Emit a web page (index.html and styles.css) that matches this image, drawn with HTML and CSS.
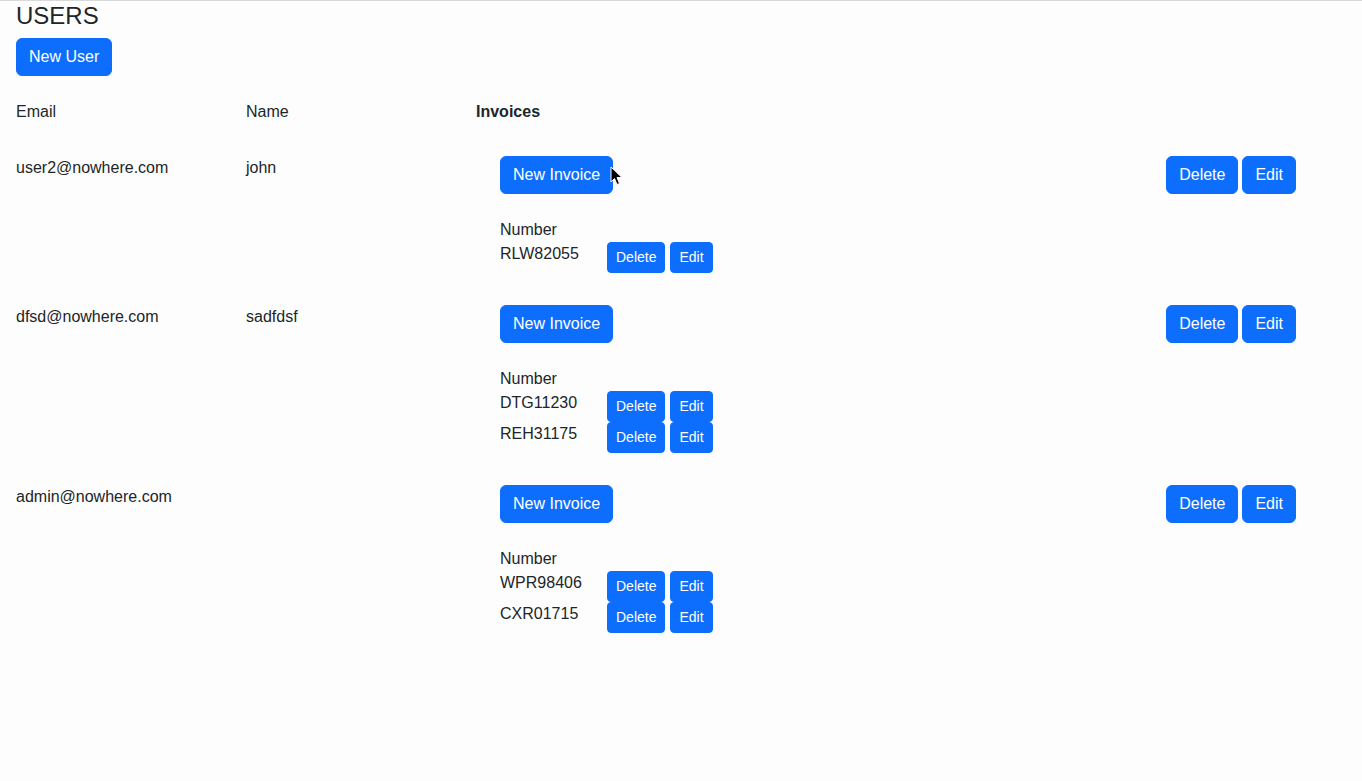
FILE: index.html
```html
<html lang="en">
<head>
  <meta charset="UTF-8">
  <title>Users</title>
  <link rel="stylesheet" href="styles.css">
</head>
<body>

  <div class="page">
    <h4 class="title">USERS</h4>
    <button class="btn">New User</button>

    <div class="users">
      <div class="row head">
        <div>Email</div>
        <div>Name</div>
        <div class="bold">Invoices</div>
        <div></div>
      </div>

      <div class="row">
        <div>user2@nowhere.com</div>
        <div>john</div>
        <div class="invoices">
          <button class="btn">New Invoice</button>
          <div class="inv-head">Number</div>
          <div class="inv-row">
            <div class="inv-num">RLW82055</div>
            <button class="btn btn-sm">Delete</button>
            <button class="btn btn-sm">Edit</button>
          </div>
        </div>
        <div class="actions">
          <button class="btn">Delete</button>
          <button class="btn">Edit</button>
        </div>
      </div>

      <div class="row">
        <div>dfsd@nowhere.com</div>
        <div>sadfdsf</div>
        <div class="invoices">
          <button class="btn">New Invoice</button>
          <div class="inv-head">Number</div>
          <div class="inv-row">
            <div class="inv-num">DTG11230</div>
            <button class="btn btn-sm">Delete</button>
            <button class="btn btn-sm">Edit</button>
          </div>
          <div class="inv-row">
            <div class="inv-num">REH31175</div>
            <button class="btn btn-sm">Delete</button>
            <button class="btn btn-sm">Edit</button>
          </div>
        </div>
        <div class="actions">
          <button class="btn">Delete</button>
          <button class="btn">Edit</button>
        </div>
      </div>

      <div class="row">
        <div>admin@nowhere.com</div>
        <div></div>
        <div class="invoices">
          <button class="btn">New Invoice</button>
          <div class="inv-head">Number</div>
          <div class="inv-row">
            <div class="inv-num">WPR98406</div>
            <button class="btn btn-sm">Delete</button>
            <button class="btn btn-sm">Edit</button>
          </div>
          <div class="inv-row">
            <div class="inv-num">CXR01715</div>
            <button class="btn btn-sm">Delete</button>
            <button class="btn btn-sm">Edit</button>
          </div>
        </div>
        <div class="actions">
          <button class="btn">Delete</button>
          <button class="btn">Edit</button>
        </div>
      </div>
    </div>
  </div>

  <svg class="cursor" width="14" height="20" viewBox="0 0 14 20">
    <path d="M1 1 L1 16 L4.5 12.5 L7 18.5 L9.5 17.5 L7 11.5 L12 11.5 Z" fill="#000" stroke="#fff" stroke-width="1"/>
  </svg>

</body>
</html>
```

FILE: styles.css
```css
body {
  margin: 0;
  padding: 0;
  background: #fdfdfd;
  border-top: 1px solid #d9d9d9;
  font-family: "Liberation Sans", Arial, sans-serif;
  font-size: 16px;
  line-height: 24px;
  color: #212529;
  position: relative;
  min-height: 780px;
}

.page {
  padding: 1px 16px 0;
}

.title {
  margin: 0 0 7px;
  font-size: 24px;
  font-weight: 500;
  line-height: 1.2;
}

.btn {
  display: inline-block;
  background: #0d6efd;
  color: #fff;
  border: 1px solid #0d6efd;
  border-radius: 6px;
  font-family: inherit;
  font-size: 16px;
  line-height: 24px;
  padding: 6px 12px;
  margin: 0;
  cursor: pointer;
}

.btn-sm {
  font-size: 14px;
  line-height: 21px;
  padding: 4px 8px;
  border-radius: 4px;
}

.users {
  margin-top: 8px;
}

.row {
  display: grid;
  grid-template-columns: 230px 230px 1fr auto;
  padding: 16px 0;
  align-items: start;
}

.bold {
  font-weight: 700;
}

.invoices {
  padding-left: 24px;
}

.inv-head {
  margin-top: 24px;
}

.inv-row {
  display: flex;
  align-items: flex-start;
  gap: 5px;
}

.inv-num {
  width: 102px;
}

.actions {
  display: flex;
  gap: 4px;
  padding-right: 50px;
}

.cursor {
  position: absolute;
  left: 610px;
  top: 165px;
}
```
